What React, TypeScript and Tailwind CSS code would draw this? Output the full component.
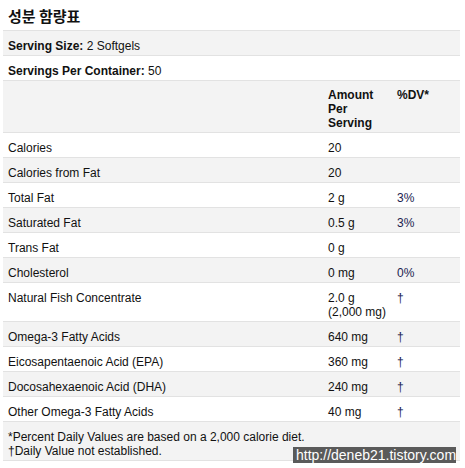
const rows: [string, React.ReactNode, string][] = [
  ["Calories", "20", ""],
  ["Calories from Fat", "20", ""],
  ["Total Fat", "2 g", "3%"],
  ["Saturated Fat", "0.5 g", "3%"],
  ["Trans Fat", "0 g", ""],
  ["Cholesterol", "0 mg", "0%"],
  [
    "Natural Fish Concentrate",
    <>
      2.0 g
      <br />
      (2,000 mg)
    </>,
    "†",
  ],
  ["Omega-3 Fatty Acids", "640 mg", "†"],
  ["Eicosapentaenoic Acid (EPA)", "360 mg", "†"],
  ["Docosahexaenoic Acid (DHA)", "240 mg", "†"],
  ["Other Omega-3 Fatty Acids", "40 mg", "†"],
];

const rowCls =
  "grid grid-cols-[320px_69px_1fr] border-b border-[#e2e2e2] pl-[5px] pb-[2px]";

export default function App() {
  return (
    <main className="min-h-screen w-[465px] bg-white font-['Liberation_Sans',Arial,sans-serif] text-[12px] leading-[14px] text-[#111]">
      <h1 className="h-[30px] pl-[8px] pt-[6px] font-['Noto_Sans_CJK_KR',sans-serif] text-[15px] font-bold leading-[20px] text-[#111]">
        성분 함량표
      </h1>

      <section className="relative mx-[3px] w-[457px] border-t border-[#e2e2e2]">
        <div className={`${rowCls} bg-[#f3f3f3] pt-[8px]`}>
          <div className="col-span-3">
            <b>Serving Size:</b> 2 Softgels
          </div>
        </div>
        <div className={`${rowCls} bg-white pt-[8px]`}>
          <div className="col-span-3">
            <b>Servings Per Container:</b> 50
          </div>
        </div>
        <div className={`${rowCls} bg-[#f3f3f3] pt-[7px] font-bold`}>
          <div />
          <div>
            Amount
            <br />
            Per
            <br />
            Serving
          </div>
          <div>%DV*</div>
        </div>

        {rows.map(([name, amount, dv], i) => (
          <div
            key={name}
            className={`${rowCls} pt-[8px] ${i % 2 === 0 ? "bg-white" : "bg-[#f3f3f3]"}`}
          >
            <div>{name}</div>
            <div>{amount}</div>
            <div className="text-[#1b2350]">{dv}</div>
          </div>
        ))}

        <div className={`${rowCls} bg-[#f3f3f3] pt-[8px]`}>
          <div className="col-span-3">
            *Percent Daily Values are based on a 2,000 calorie diet.
            <br />
            †Daily Value not established.
          </div>
        </div>

        <div className="absolute left-[290px] top-[416px] h-[16px] w-[163px] bg-[#5a5a5a] pl-[3px] text-[14px] leading-[16px] text-white">
          http://deneb21.tistory.com
        </div>
      </section>
    </main>
  );
}
